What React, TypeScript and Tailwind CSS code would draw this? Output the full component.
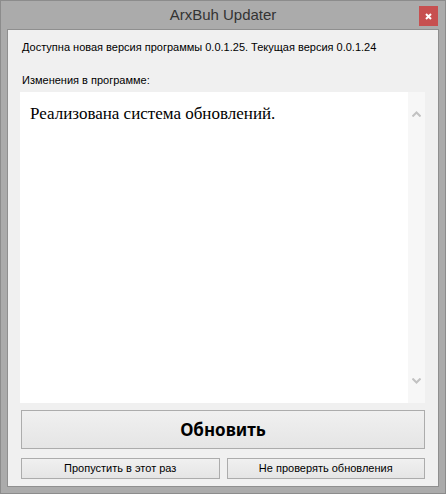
import React from 'react';

// Окно обновления ArxBuh в стиле Windows 8

const sans = { fontFamily: '"Liberation Sans", Arial, sans-serif' };

function Chevron({ up }: { up?: boolean }) {
    return (
        <svg width="9" height="6" viewBox="0 0 9 6" className="block">
            <path d={up ? 'M0.5 5.5 L4.5 1.5 L8.5 5.5' : 'M0.5 0.5 L4.5 4.5 L8.5 0.5'} fill="none" stroke="#c2c2c2" strokeWidth="2" />
        </svg>
    );
}

export default function App() {
    return (
        <div className="w-[446px] h-[494px] bg-[#ababab] border border-[#8c8c8c] flex flex-col" style={sans}>
            {/* Title bar */}
            <div className="h-[28px] relative flex items-center justify-center">
                <span className="text-[15px] text-[#333] leading-none -mt-[2px]">ArxBuh Updater</span>
                <div className="absolute right-[7px] top-[5px] w-[19px] h-[20px] bg-[#c75050] flex items-center justify-center">
                    <svg width="7" height="7" viewBox="0 0 7 7">
                        <path d="M1 1 L6 6 M6 1 L1 6" stroke="#fff" strokeWidth="2" />
                    </svg>
                </div>
            </div>

            {/* Client area */}
            <div className="mx-[6px] mb-[6px] flex-1 border border-[#8f8f8f] bg-[#f0f0f0] flex flex-col">
                <p className="text-[11px] text-black leading-[12px] pl-[14px] pt-[11px]">
                    Доступна новая версия программы 0.0.1.25. Текущая версия 0.0.1.24
                </p>
                <p className="text-[11px] text-black leading-[12px] pl-[14px] mt-[21px]">Изменения в программе:</p>

                <div className="ml-[12px] mr-[13px] mt-[6px] h-[311px] bg-white flex">
                    <div className="flex-1 pl-[10px] pt-[13px] text-[17px] text-black leading-none" style={{ fontFamily: '"Liberation Serif", "Times New Roman", serif' }}>
                        Реализована система обновлений.
                    </div>
                    <div className="w-[17px] bg-[#f7f7f7] flex flex-col items-center justify-between pt-[19px] pb-[19px]">
                        <Chevron up />
                        <Chevron />
                    </div>
                </div>

                <button className="ml-[13px] mr-[13px] mt-[7px] h-[39px] border border-[#acacac] bg-gradient-to-b from-[#f0f0f0] to-[#e5e5e5] text-[17px] font-bold text-black flex items-center justify-center" style={{ fontFamily: '"Noto Sans", sans-serif' }}>
                    Обновить
                </button>

                <div className="ml-[13px] mr-[13px] mt-[9px] flex gap-[7px]">
                    <button className="flex-1 h-[21px] border border-[#acacac] bg-gradient-to-b from-[#f0f0f0] to-[#e5e5e5] text-[11px] text-black flex items-center justify-center">
                        Пропустить в этот раз
                    </button>
                    <button className="flex-1 h-[21px] border border-[#acacac] bg-gradient-to-b from-[#f0f0f0] to-[#e5e5e5] text-[11px] text-black flex items-center justify-center">
                        Не проверять обновления
                    </button>
                </div>
            </div>
        </div>
    );
}
